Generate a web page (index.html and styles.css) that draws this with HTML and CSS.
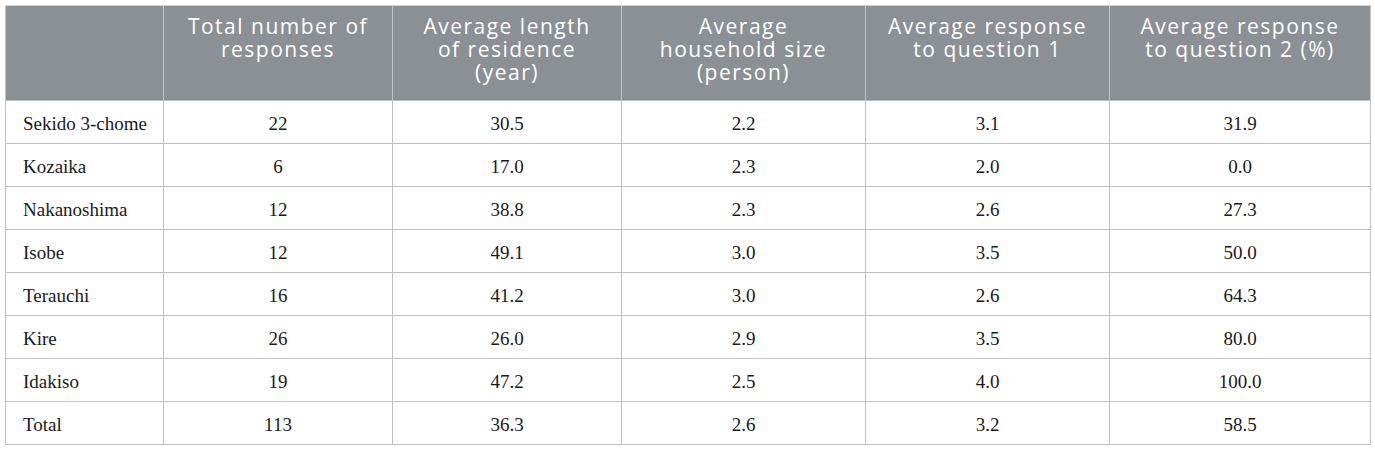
FILE: index.html
```html
<!DOCTYPE html>
<html lang="en">
<head>
<meta charset="utf-8">
<title>Table</title>
<link rel="stylesheet" href="styles.css">
</head>
<body>
<table class="data">
  <colgroup>
    <col class="c0"><col class="c1"><col class="c2"><col class="c3"><col class="c4"><col class="c5">
  </colgroup>
  <thead>
    <tr>
      <th></th>
      <th>Total number of responses</th>
      <th>Average length of residence (year)</th>
      <th>Average household size (person)</th>
      <th>Average response to question 1</th>
      <th>Average response to question 2 (%)</th>
    </tr>
  </thead>
  <tbody>
    <tr><td>Sekido 3-chome</td><td>22</td><td>30.5</td><td>2.2</td><td>3.1</td><td>31.9</td></tr>
    <tr><td>Kozaika</td><td>6</td><td>17.0</td><td>2.3</td><td>2.0</td><td>0.0</td></tr>
    <tr><td>Nakanoshima</td><td>12</td><td>38.8</td><td>2.3</td><td>2.6</td><td>27.3</td></tr>
    <tr><td>Isobe</td><td>12</td><td>49.1</td><td>3.0</td><td>3.5</td><td>50.0</td></tr>
    <tr><td>Terauchi</td><td>16</td><td>41.2</td><td>3.0</td><td>2.6</td><td>64.3</td></tr>
    <tr><td>Kire</td><td>26</td><td>26.0</td><td>2.9</td><td>3.5</td><td>80.0</td></tr>
    <tr><td>Idakiso</td><td>19</td><td>47.2</td><td>2.5</td><td>4.0</td><td>100.0</td></tr>
    <tr><td>Total</td><td>113</td><td>36.3</td><td>2.6</td><td>3.2</td><td>58.5</td></tr>
  </tbody>
</table>
</body>
</html>
```

FILE: styles.css
```css
html, body {
  margin: 0;
  padding: 0;
  background: #ffffff;
}
body {
  padding: 5px 6px 5px 5px;
}
.data {
  border-collapse: collapse;
  table-layout: fixed;
  width: 1365px;
}
.c0 { width: 158px; }
.c1 { width: 229px; }
.c2 { width: 229px; }
.c3 { width: 244px; }
.c4 { width: 244px; }
.c5 { width: 261px; }
.data th {
  background: #8a9094;
  color: #ffffff;
  font-family: "Open Sans", "Lato", sans-serif;
  font-weight: 400;
  font-size: 21px;
  letter-spacing: 1.5px;
  line-height: 23px;
  text-align: center;
  vertical-align: top;
  height: 95px;
  box-sizing: border-box;
  padding: 9px 16px 0;
  border: 1px solid #c2c4c6;
  border-top-color: #d0d0d0;
  border-bottom-color: #c0c0c0;
}
.data th + th {
  border-left-color: #a4a9ac;
}
.data td {
  font-family: "Liberation Serif", "Times New Roman", serif;
  font-size: 19px;
  color: #1a1a1a;
  text-align: center;
  height: 43px;
  box-sizing: border-box;
  padding: 3px 8px 0;
  border: 1px solid #c0c0c0;
  vertical-align: middle;
}
.data td:first-child {
  text-align: left;
  padding-left: 17px;
}
```
